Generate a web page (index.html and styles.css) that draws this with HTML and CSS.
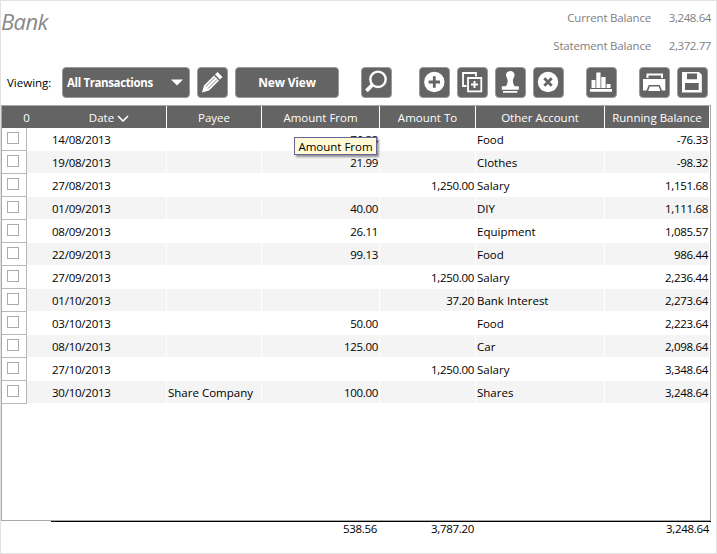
FILE: index.html
```
<!DOCTYPE html>
<html lang="en">
<head>
<meta charset="utf-8">
<title>Bank</title>
<link rel="stylesheet" href="styles.css">
</head>
<body>
<div class="page">
  <header class="top">
    <h1>Bank</h1>
    <div class="balances">
      <span>Current Balance</span><span class="num">3,248.64</span>
      <span>Statement Balance</span><span class="num">2,372.77</span>
    </div>
  </header>
  <div class="toolbar">
    <span class="viewing">Viewing:</span>
    <div class="btn select"><span>All Transactions</span><svg width="12" height="7" viewBox="0 0 12 7"><path d="M0 0.5H12L6 6.5Z"/></svg></div>
    <div class="btn icon"><svg viewBox="0 0 31 31"><path d="M5 25.5L7 18.5L17 8.5L22 13.5L12 23.5Z M18 7.5L20.5 5L25.5 10L23 12.5Z"/><path class="cut" d="M9 19.5L18 10.5M11 21.5L20 12.5" stroke-width=".8"/></svg></div>
    <div class="btn newview">New View</div>
    <div class="btn icon search"><svg viewBox="0 0 31 31"><circle class="line" cx="17" cy="12.3" r="7.7" stroke-width="2.4"/><path class="line" d="M11.2 18L5.4 23.8" stroke-width="3.8"/></svg></div>
    <div class="btn icon add"><svg viewBox="0 0 31 31"><circle cx="15.3" cy="15" r="10.2"/><path class="cut" d="M9.6 15H21M15.3 9.3V20.7" stroke-width="2.8"/></svg></div>
    <div class="btn icon"><svg viewBox="0 0 31 31"><path class="line" d="M9.5 19H6V6H19V9.5" stroke-width="1.8"/><path class="line" d="M11 11H24.3V24.3H11Z" stroke-width="1.8"/><path class="line" d="M14 17.5H21M17.5 14V21" stroke-width="2"/></svg></div>
    <div class="btn icon"><svg viewBox="0 0 31 31"><path d="M15.3 4C12.8 4 11 5.8 11 8.2C11 10 12.7 11.5 12.7 13.5C12.7 16 11.8 17.5 11 19.3H6.8V22.8H23.8V19.3H19.6C18.8 17.5 17.9 16 17.9 13.5C17.9 11.5 19.6 10 19.6 8.2C19.6 5.8 17.8 4 15.3 4Z M8 24H22.4V25.8H8Z"/></svg></div>
    <div class="btn icon"><svg viewBox="0 0 31 31"><circle cx="15" cy="15" r="10.2"/><path class="cut" d="M11.3 11.3L18.7 18.7M18.7 11.3L11.3 18.7" stroke-width="2.8"/></svg></div>
    <div class="btn icon chart"><svg viewBox="0 0 31 31"><path d="M5.5 13H9.5V21H5.5ZM10.3 5.5H14.5V21H10.3ZM15.3 10H19.6V21H15.3ZM20.5 17H24.5V21H20.5ZM4 22H26V24.7H4Z"/></svg></div>
    <div class="btn icon print"><svg viewBox="0 0 31 31"><path d="M7.5 6.5H24V11H22V8.5H9.5V11H7.5Z"/><path d="M4 12H26.3V23.5H23L20.7 18H9.8L7.5 23.5H4Z M10.8 19.5H19.8L21.4 24H9.2Z"/></svg></div>
    <div class="btn icon"><svg viewBox="0 0 31 31"><path fill-rule="evenodd" d="M5 5H22L24.8 7.8V25.5H5Z M10 6.5V12.2H20V6.5Z M8 16V23H21.7V16Z"/></svg></div>
  </div>
  <div class="table">
    <div class="row head"><div>0</div><div>Date <svg width="12" height="7" viewBox="0 0 12 7"><path d="M1 1L6 6L11 1"/></svg></div><div>Payee</div><div>Amount From</div><div>Amount To</div><div>Other Account</div><div>Running Balance</div></div>
    <div class="row"><div><i></i></div><div>14/08/2013</div><div></div><div class="anchor">76.33<span class="tip">Amount From</span></div><div></div><div>Food</div><div>-76.33</div></div>
    <div class="row"><div><i></i></div><div>19/08/2013</div><div></div><div>21.99</div><div></div><div>Clothes</div><div>-98.32</div></div>
    <div class="row"><div><i></i></div><div>27/08/2013</div><div></div><div></div><div>1,250.00</div><div>Salary</div><div>1,151.68</div></div>
    <div class="row"><div><i></i></div><div>01/09/2013</div><div></div><div>40.00</div><div></div><div>DIY</div><div>1,111.68</div></div>
    <div class="row"><div><i></i></div><div>08/09/2013</div><div></div><div>26.11</div><div></div><div>Equipment</div><div>1,085.57</div></div>
    <div class="row"><div><i></i></div><div>22/09/2013</div><div></div><div>99.13</div><div></div><div>Food</div><div>986.44</div></div>
    <div class="row"><div><i></i></div><div>27/09/2013</div><div></div><div></div><div>1,250.00</div><div>Salary</div><div>2,236.44</div></div>
    <div class="row"><div><i></i></div><div>01/10/2013</div><div></div><div></div><div>37.20</div><div>Bank Interest</div><div>2,273.64</div></div>
    <div class="row"><div><i></i></div><div>03/10/2013</div><div></div><div>50.00</div><div></div><div>Food</div><div>2,223.64</div></div>
    <div class="row"><div><i></i></div><div>08/10/2013</div><div></div><div>125.00</div><div></div><div>Car</div><div>2,098.64</div></div>
    <div class="row"><div><i></i></div><div>27/10/2013</div><div></div><div></div><div>1,250.00</div><div>Salary</div><div>3,348.64</div></div>
    <div class="row"><div><i></i></div><div>30/10/2013</div><div>Share Company</div><div>100.00</div><div></div><div>Shares</div><div>3,248.64</div></div>
  </div>
  <div class="totals"><span>538.56</span><span>3,787.20</span><span>3,248.64</span></div>
</div>
</body>
</html>
```
FILE: styles.css
```
* { box-sizing: border-box; }
body { margin: 0; background: #fff; color: #000; font: 11.5px/16px "Open Sans", "Noto Sans", sans-serif; }
.page { width: 717px; height: 554px; border: 1px solid #e2e2e2; overflow: hidden; }
.top { height: 66px; display: flex; justify-content: space-between; color: #808080; }
h1 { margin: 5px 0 0; font: italic 400 22px/30px "Open Sans", sans-serif; letter-spacing: -0.6px; color: #888; }
.balances { display: grid; grid-template-columns: auto 60px; grid-auto-rows: 28px; padding: 3px 5px 0 0; line-height: 28px; text-align: right; letter-spacing: -0.18px; }
.num { letter-spacing: -0.4px; }
.toolbar { height: 38px; display: flex; align-items: flex-start; padding-left: 6px; }
.viewing { width: 55px; line-height: 32px; }
.btn { flex: none; height: 31px; margin-right: 7px; background: #646464; border: 1px solid #9a9a9a; border-radius: 4px; color: #fff; font-weight: 700; }
.select { width: 128px; display: flex; align-items: center; justify-content: space-between; padding: 0 6px 0 4px; letter-spacing: -0.38px; }
.select svg { fill: #fff; }
.newview { width: 104px; text-align: center; font-size: 12px; line-height: 30px; letter-spacing: -0.2px; }
.icon { width: 31px; }
.icon svg { display: block; width: 31px; height: 31px; margin: -1px; fill: #fff; }
.icon .line { fill: none; stroke: #fff; }
.icon .cut { fill: none; stroke: #646464; }
.search { margin-left: 15px; }
.add { margin-left: 20px; }
.chart { margin-left: 15px; }
.print { margin-left: 15px; }
.table { width: 710px; height: 416px; border: 1px solid #a8a8a8; }
.row { display: grid; grid-template-columns: 25px 140px 95px 118px 96px 129px 105px; grid-template-rows: 23px; height: 23px; }
.row > div { border: 0 solid #fff; border-width: 0 1px 1px 0; line-height: 23px; padding: 0 1px; white-space: nowrap; }
.row:nth-child(odd) > div { background: #f4f4f4; }
.row > div:nth-child(1) { background: #fff; border-color: #b8b8b8; padding: 4px 0 0 5px; }
.row > div:nth-child(2) { padding-left: 25px; letter-spacing: -0.24px; }
.row > div:nth-child(4), .row > div:nth-child(5), .row > div:nth-child(7) { text-align: right; letter-spacing: -0.3px; }
.row.head { height: 22px; grid-template-columns: 50px 115px 95px 118px 96px 129px 105px; grid-template-rows: 22px; }
.row.head > div { background: #646464; color: #fff; border-bottom: 0; text-align: center; padding: 0; line-height: 23px; letter-spacing: 0; }
.row.head > div:nth-child(1) { background: #646464; border-color: #646464; }
.head svg { fill: none; stroke: #fff; stroke-width: 1.6; }
.row i { display: block; width: 12px; height: 12px; border: 1px solid #aaa; }
.anchor { position: relative; }
.row .tip { position: absolute; left: 32px; top: 9px; width: 83px; height: 18px; border: 1px solid #66669a; background: #fff9d6; box-shadow: 2px 2px 2px #0006; line-height: 17px; text-align: center; letter-spacing: 0; z-index: 1; }
.totals { display: grid; grid-template-columns: 328px 97px 235px; width: 660px; margin-left: 50px; border-top: 1px solid #000; line-height: 14px; text-align: right; letter-spacing: -0.3px; }
.totals span { padding-right: 2px; }
```
